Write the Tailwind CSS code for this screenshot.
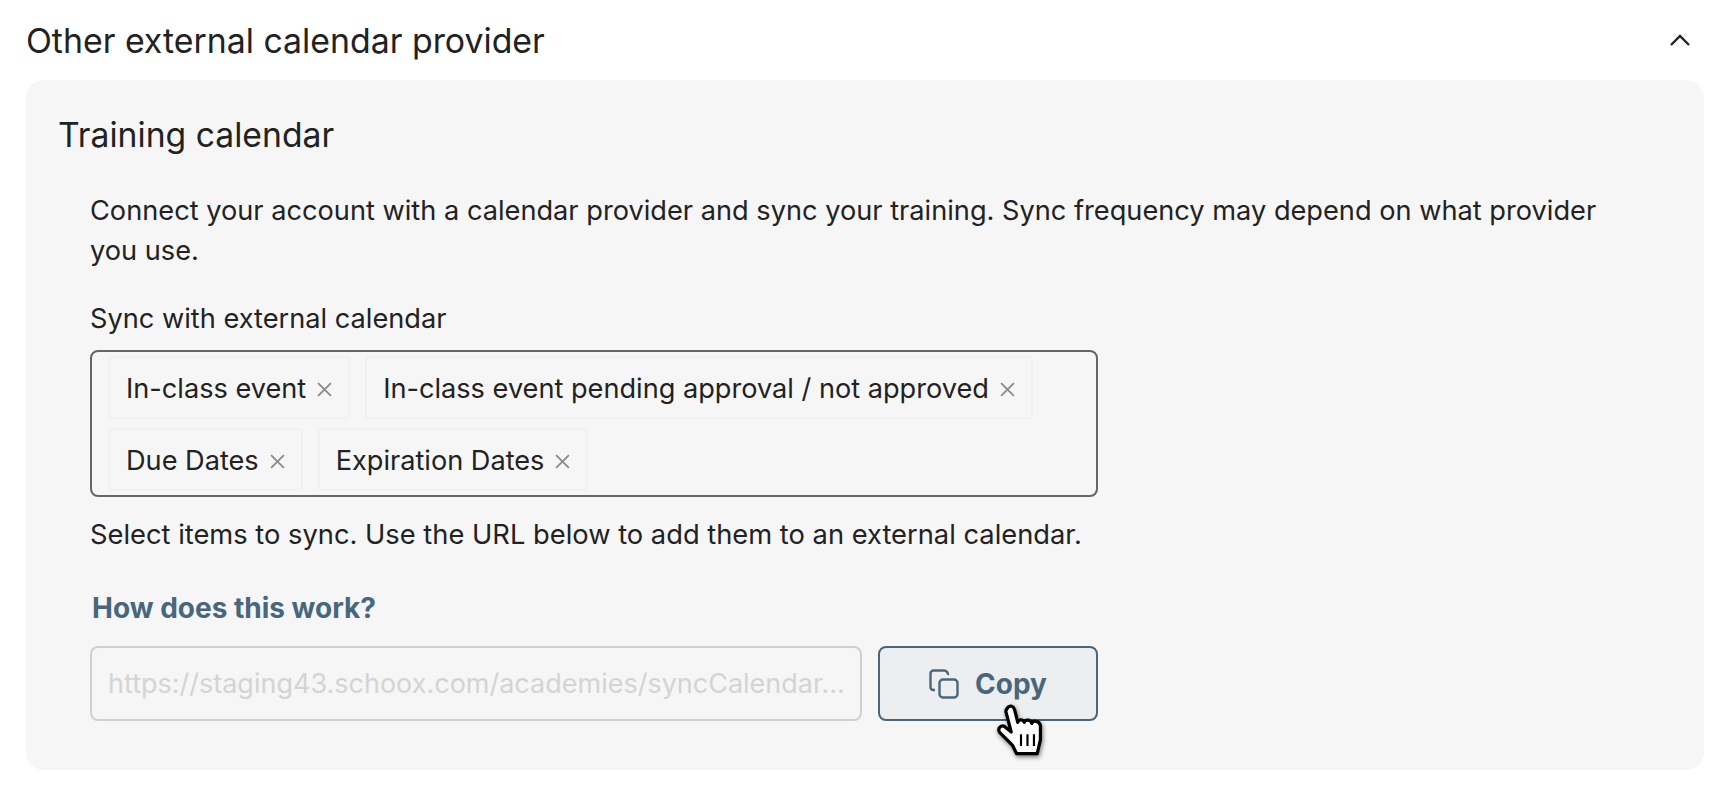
<!DOCTYPE html>
<html lang="en">
  <head>
    <meta charset="UTF-8" />
    <title>Calendar settings</title>
    <script src="https://cdn.jsdelivr.net/npm/@tailwindcss/browser@4"></script>
  </head>
  <body class="bg-white font-['Inter',sans-serif] text-[#222]">
    <!-- Section header -->
    <div class="flex h-[80px] items-center justify-between pl-[26px] pr-[36px]">
      <h2 class="pt-[2px] text-[33.85px] leading-[44px]">Other external calendar provider</h2>
      <svg class="h-[12px] w-[20px]" viewBox="0 0 20 12" fill="none" stroke="#222" stroke-width="2.4">
        <path d="M1 11 L10 2 L19 11" />
      </svg>
    </div>

    <!-- Panel -->
    <div class="ml-[26px] h-[690px] w-[1678px] rounded-[18px] bg-[#f6f6f6] pl-[32px] pt-[28px]">
      <h3 class="text-[33.7px] leading-[54px]">Training calendar</h3>

      <div class="pl-[32px]">
        <p class="mt-[29px] w-[1540px] text-[27.2px] leading-[40px]">
          Connect your account with a calendar provider and sync your training. Sync frequency may depend on what provider you use.
        </p>

        <label class="mt-[28px] block text-[27.2px] leading-[40px]">Sync with external calendar</label>

        <!-- Tag select -->
        <div class="mt-[11px] flex h-[147px] w-[1008px] flex-wrap content-start gap-x-[15px] gap-y-[9px] rounded-[8px] border-2 border-[#666] pl-[16px] pt-[4px]">
          <span class="flex h-[63px] items-center gap-[11px] rounded-[4px] border-2 border-[#f1f1f1] px-[16px] pt-[3px] text-[27.15px]">
            In-class event
            <svg class="h-[15px] w-[15px]" viewBox="0 0 14 14" stroke="#888" stroke-width="1.6"><path d="M1 1 L13 13 M13 1 L1 13" /></svg>
          </span>
          <span class="flex h-[63px] items-center gap-[11px] rounded-[4px] border-2 border-[#f1f1f1] px-[16px] pt-[3px] text-[27.15px]">
            In-class event pending approval / not approved
            <svg class="h-[15px] w-[15px]" viewBox="0 0 14 14" stroke="#888" stroke-width="1.6"><path d="M1 1 L13 13 M13 1 L1 13" /></svg>
          </span>
          <span class="flex h-[63px] items-center gap-[11px] rounded-[4px] border-2 border-[#f1f1f1] px-[16px] pt-[3px] text-[27.15px]">
            Due Dates
            <svg class="h-[15px] w-[15px]" viewBox="0 0 14 14" stroke="#888" stroke-width="1.6"><path d="M1 1 L13 13 M13 1 L1 13" /></svg>
          </span>
          <span class="flex h-[63px] items-center gap-[11px] rounded-[4px] border-2 border-[#f1f1f1] px-[16px] pt-[3px] text-[27.15px]">
            Expiration Dates
            <svg class="h-[15px] w-[15px]" viewBox="0 0 14 14" stroke="#888" stroke-width="1.6"><path d="M1 1 L13 13 M13 1 L1 13" /></svg>
          </span>
        </div>

        <p class="mt-[18px] text-[27.3px] leading-[40px]">Select items to sync. Use the URL below to add them to an external calendar.</p>

        <a class="ml-[2px] mt-[33px] block text-[28px] font-bold leading-[40px] text-[#48677d]">How does this work?</a>

        <!-- URL and copy -->
        <div class="mt-[18px] flex gap-[16px]">
          <div class="flex h-[75px] w-[772px] items-center rounded-[8px] border-2 border-[#d0d0d0] pl-[16px] pr-[10px] pt-[2px]">
            <span class="truncate text-[27px] text-[#d4d4d4]">https://staging43.schoox.com/academies/syncCalendar...</span>
          </div>
          <div class="relative">
            <button class="flex h-[75px] w-[220px] items-center justify-center gap-[16px] rounded-[8px] border-2 border-[#48677d] bg-[#eceef0] text-[28px] font-bold text-[#48677d]">
              <svg class="h-[30px] w-[30px]" viewBox="0 0 30 30" fill="none" stroke="#48677d" stroke-width="2.4">
                <path d="M6 21 H4 A3 3 0 0 1 1.5 18 V4.5 A3 3 0 0 1 4.5 1.5 H15 A4 4 0 0 1 19 6" />
                <rect x="10.5" y="10.5" width="18" height="18" rx="3.5" />
              </svg>
              Copy
            </button>
            <!-- Mouse cursor -->
            <svg class="absolute left-[118px] top-[58px] h-[54px] w-[50px] drop-shadow-[1px_2px_2px_rgba(0,0,0,0.5)]" viewBox="0 0 46 50" fill="#fff" stroke="#000" stroke-width="3" stroke-linejoin="round">
              <path d="M11 3 C13 1 16 2 17 5 L20 17 C21 14 25 14 26 17 C27 14 32 14 33 18 C34 15 40 15 41 20 L41 33 L38 46 L19 46 L15 38 L3 26 C1 22 5 19 8 21 L14 26 L9 7 C9 5 10 4 11 3 Z" />
              <path d="M23 28 V39 M29 28 V39 M35 28 V39" fill="none" stroke-width="2" />
            </svg>
          </div>
        </div>
      </div>
    </div>
  </body>
</html>
